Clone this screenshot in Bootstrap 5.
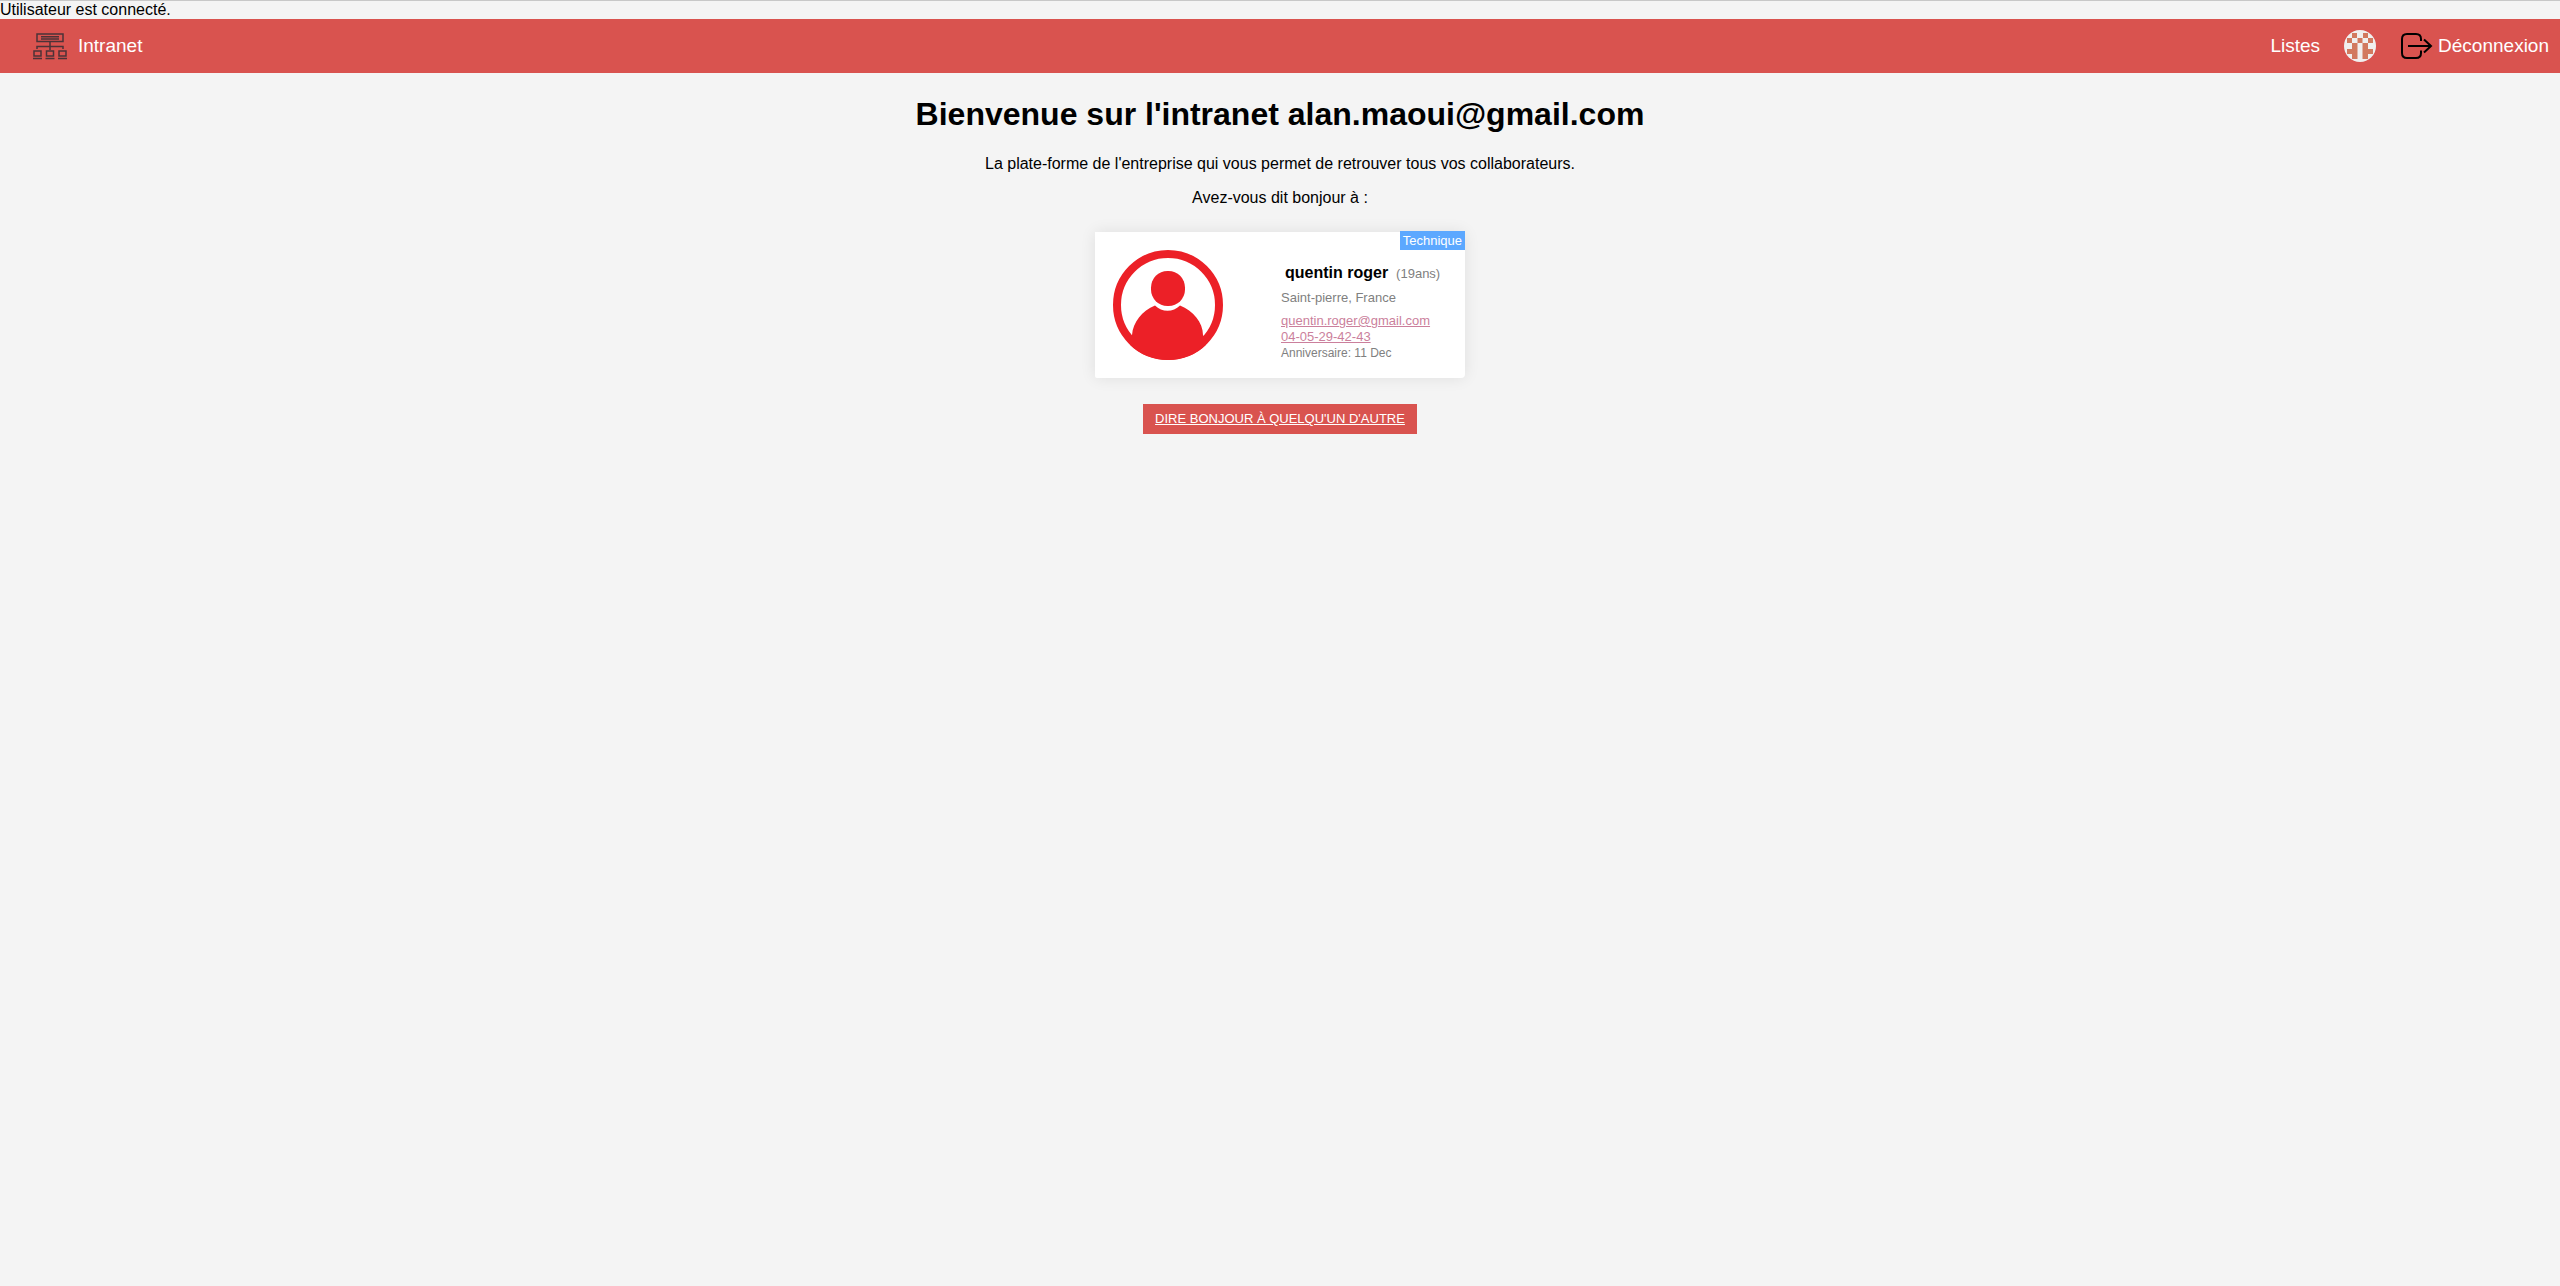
<!DOCTYPE html>
<html lang="fr">
<head>
<meta charset="utf-8">
<meta name="viewport" content="width=device-width, initial-scale=1">
<title>Intranet</title>
<link href="https://cdn.jsdelivr.net/npm/bootstrap@5.3.0/dist/css/bootstrap.min.css" rel="stylesheet">
<style>
body{font-family:"Liberation Sans",Arial,sans-serif;font-size:16px;line-height:18px;color:#000;background:#f4f4f4;border-top:1px solid #c8c8c8}
.site-bar{background:#d9534f;height:54px;padding:0 11px 0 32px}
.site-bar a{color:#fff;font-size:19px;line-height:24px;text-decoration:none}
.site-bar svg{display:block}
.brand{gap:10px}
.links{gap:24px}
.logout{gap:5px}
h1{font-size:32px;line-height:36px;font-weight:700;margin:23px 0}
.person{width:370px;min-height:146px;border-radius:0 4px 4px 2px;background:#fff;box-shadow:0 0 16px rgba(0,0,0,.09);margin-top:1px;padding:18px 18px 16px;color:#808080;font-size:13px;line-height:15px}
.person a{color:#cb7f9c}
.person h2{font-size:16px;line-height:18px;font-weight:700;color:#000;margin:0}
.person-info{width:166px;padding-top:14px}
.contact{line-height:16px}
.birthday{font-size:12px}
.service{position:absolute;top:-1px;right:0;background:#5ca8ff;color:#fff;line-height:19px;padding:0 3px}
.other{background:#d9534f;color:#fff;font-size:13px;line-height:18px;padding:6px 12px;margin-top:26px}
.other:hover{color:#fff}
</style>
<script src="https://cdn.jsdelivr.net/npm/bootstrap@5.3.0/dist/js/bootstrap.bundle.min.js" defer></script>
</head>
<body>
<div>Utilisateur est connecté.</div>
<nav class="site-bar d-flex align-items-center justify-content-between">
  <a href="#" class="brand d-flex align-items-center">
    <svg width="36" height="28" viewBox="0 0 36 28" fill="none" stroke="#4b3338" stroke-width="1.5" aria-hidden="true">
      <path d="M5 2H31V9.500H5ZM9 4.700H27M9 7H27M18 9.500V18M5 17V14.500H31V17M2 19H9V24H2ZM14.500 19H21.500V24H14.500ZM27 19H34V24H27ZM1 26.500H10M13.500 26.500H22.500M26 26.500H35"/>
    </svg>
    <span>Intranet</span>
  </a>
  <div class="links d-flex align-items-center">
    <a href="#">Listes</a>
    <a href="#" aria-label="Profil">
      <svg width="32" height="32" viewBox="0 0 32 32" aria-hidden="true">
        <defs><clipPath id="disc"><circle cx="16" cy="16" r="16"/></clipPath></defs>
        <g clip-path="url(#disc)"><path fill="#f0efef" d="M0 0H32V32H0Z"/>
        <path fill="#d2795f" d="M8 3H13V8H8ZM19 3H24V8H19ZM3 8H8V13H3ZM13.500 8H18.500V13H13.500ZM24 8H29V13H24ZM8 13H13.500V29H8V24H3V19H8ZM18.500 13H24V19H29V24H24V29H18.500Z"/></g>
      </svg>
    </a>
    <a href="#" class="logout d-flex align-items-center">
      <svg width="33" height="28" viewBox="0 0 33 28" fill="none" stroke="#000" stroke-width="2" aria-hidden="true">
        <path d="M21 9V7Q21 2 16 2H7Q2 2 2 7V21Q2 26 7 26H16Q21 26 21 21V18.500M8 14H31M24 7.500L31 14L24 20.500"/>
      </svg>
      <span>Déconnexion</span>
    </a>
  </div>
</nav>
<main class="d-flex flex-column align-items-center text-center">
  <h1>Bienvenue sur l'intranet alan.maoui@gmail.com</h1>
  <p class="mb-3">La plate-forme de l'entreprise qui vous permet de retrouver tous vos collaborateurs.</p>
  <p class="mb-4">Avez-vous dit bonjour à :</p>
  <article class="person position-relative d-flex justify-content-between text-start">
    <span class="service">Technique</span>
    <svg width="110" height="110" viewBox="0 0 110 110" role="img" aria-label="Photo">
      <defs><clipPath id="ring"><circle cx="55" cy="55" r="55"/></clipPath></defs>
      <circle cx="55" cy="55" r="51" fill="none" stroke="#ec2027" stroke-width="8"/>
      <path fill="#ec2027" clip-path="url(#ring)" d="M19 85C20 72 29 61 42 55.500C49 62.500 60 62.500 67 55.500C80 61 90 72 90 85L93 91V110H17V91Z"/>
      <rect x="38" y="21" width="34" height="35" rx="16.500" fill="#ec2027"/>
    </svg>
    <div class="person-info">
      <div class="d-flex align-items-center gap-2 ps-1 mb-2 text-nowrap"><h2>quentin roger</h2><span>(19ans)</span></div>
      <div class="mb-2">Saint-pierre, France</div>
      <div class="contact">
        <a class="d-block" href="mailto:quentin.roger@gmail.com">quentin.roger@gmail.com</a>
        <a class="d-block" href="tel:0405294243">04-05-29-42-43</a>
        <div class="birthday">Anniversaire: 11 Dec</div>
      </div>
    </div>
  </article>
  <a class="other" href="#">DIRE BONJOUR À QUELQU'UN D'AUTRE</a>
</main>
</body>
</html>
